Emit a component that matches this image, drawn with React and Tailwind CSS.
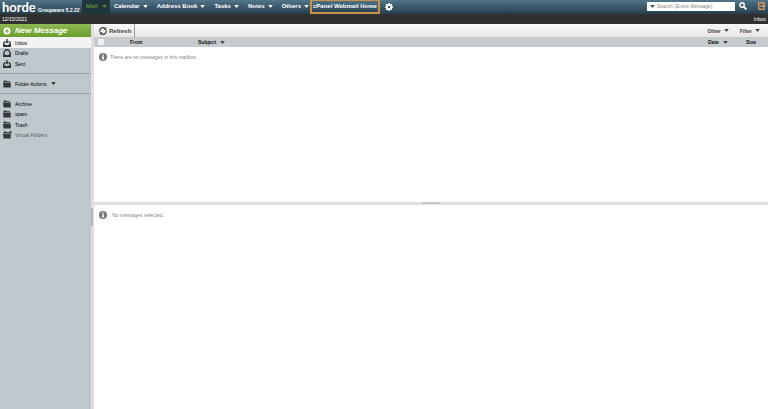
import React from 'react';

const Caret = ({ className = '' }) => (
  <svg viewBox="0 0 6 4" className={`h-[3px] w-[5px] shrink-0 ${className}`} aria-hidden="true">
    <path d="M0 0h6L3 4z" fill="currentColor" />
  </svg>
);

const TrayIcon = () => (
  <svg viewBox="0 0 16 16" className="h-2 w-2 shrink-0 text-[#2e3236]" aria-hidden="true">
    <path d="M4 5 1.500 8v6.500h13V8L12 5" fill="none" stroke="currentColor" strokeWidth="2.600" />
    <path d="M1 11h4l1.500 1.500h3L11 11h4v4.500H1z" fill="currentColor" />
    <path d="M6.700 0h2.600v4.500H12L8 9 4 4.500h2.700z" fill="currentColor" />
  </svg>
);

const DraftIcon = () => (
  <svg viewBox="0 0 16 16" className="h-2 w-2 shrink-0 text-[#2e3236]" aria-hidden="true">
    <path d="M1.500 8 5 2h6l3.500 6v6.500h-13z" fill="none" stroke="currentColor" strokeWidth="2.600" />
    <path d="M1 11h4l1.500 1.500h3L11 11h4v4.500H1z" fill="currentColor" />
  </svg>
);

const FolderIcon = ({ virtual }) => (
  <svg viewBox="0 0 16 16" className="h-2 w-2 shrink-0 overflow-visible text-[#34393c]" aria-hidden="true">
    <path d="M1 4V2.500L2 1h4.500l1 1.500H14V4z" fill="currentColor" />
    <path d="M0 5h15.500v10H1z" fill="currentColor" />
    {virtual && <circle cx="15" cy="2.500" r="3" fill="#565c60" />}
  </svg>
);

const InfoIcon = () => (
  <svg viewBox="0 0 16 16" className="h-2 w-2 shrink-0" aria-hidden="true">
    <circle cx="8" cy="8" r="8" fill="#777" />
    <path d="M6.700 3h2.800v2.400H6.700zM6 6.700h3.500V11h1v1.800H5.700V11h1V8.400H6z" fill="#fff" />
  </svg>
);

const GearIcon = () => (
  <svg viewBox="0 0 16 16" className="h-2 w-2" aria-hidden="true">
    <circle cx="8" cy="8" r="4.300" fill="none" stroke="#fff" strokeWidth="3.400" />
    <path
      d="M8 0v3M8 13v3M0 8h3M13 8h3M2.400 2.400l2 2M11.600 11.600l2 2M2.400 13.600l2-2M11.600 4.400l2-2"
      stroke="#fff"
      strokeWidth="3"
    />
  </svg>
);

const menus = ['Calendar', 'Address Book', 'Tasks', 'Notes', 'Others'];

const mailboxes = [
  { name: 'Inbox', icon: <TrayIcon />, active: true },
  { name: 'Drafts', icon: <DraftIcon /> },
  { name: 'Sent', icon: <TrayIcon /> },
];

const folders = [
  { name: 'Archive' },
  { name: 'spam' },
  { name: 'Trash' },
  { name: 'Virtual Folders', virtual: true },
];

function Header() {
  return (
    <header className="flex h-[14px] shrink-0 items-stretch bg-linear-to-b from-[#52758a] to-[#273e4b] text-[6px] font-bold text-white">
      <div className="flex w-[82px] shrink-0 items-center gap-[2px] pl-[2px]">
        <span className="font-['Lato',sans-serif] text-[13px] leading-[12px]">horde</span>
        <span className="pt-[6px] text-[5px] leading-[6px] whitespace-nowrap italic">Groupware 5.2.22</span>
      </div>
      <nav className="flex items-stretch whitespace-nowrap">
        <button className="flex w-7 items-center gap-1 bg-[#20343c] pb-[2px] pl-1 text-[#5c8a35]">
          Mail
          <Caret />
        </button>
        {menus.map((name) => (
          <button key={name} className="flex items-center gap-[3px] pr-[5px] pb-[2px] pl-1">
            {name}
            <Caret />
          </button>
        ))}
        <a
          href="#home"
          className="-ml-1 flex items-center border-2 border-t border-[#c9914a] px-px pb-[2px]"
        >
          cPanel Webmail Home
        </a>
        <button aria-label="Settings" className="flex w-[18px] items-center justify-center">
          <GearIcon />
        </button>
      </nav>
      <div className="ml-auto flex items-center gap-1 pr-[2px] pb-[2px]">
        <label className="flex h-[9px] w-[88px] items-center gap-[2px] bg-white pl-[3px] text-[#37474f]">
          <Caret />
          <input
            type="text"
            aria-label="Search"
            placeholder="Search (Entire Message)"
            className="h-2 w-full min-w-0 text-[5px] font-normal outline-none placeholder:text-[#888]"
          />
        </label>
        <button aria-label="Search" className="w-2">
          <svg viewBox="0 0 16 16" className="h-2 w-2" aria-hidden="true">
            <circle cx="6" cy="6" r="4.500" fill="none" stroke="#fff" strokeWidth="2.800" />
            <path d="m9.500 9.500 5.500 5.500" stroke="#fff" strokeWidth="3.600" />
          </svg>
        </button>
        <button aria-label="Log out" className="ml-[7px] w-2">
          <svg viewBox="0 0 16 16" className="h-2 w-2" aria-hidden="true">
            <path d="M12 4V1.500H1.500v13H12V12" fill="none" stroke="#c9915c" strokeWidth="3" />
            <path d="M5 6.500h5V3.500L16 8l-6 4.500v-3H5z" fill="#d8a066" />
          </svg>
        </button>
      </div>
    </header>
  );
}

function Sidebar() {
  return (
    <aside className="w-[91px] shrink-0 bg-[#bfc8cd]">
      <button className="flex h-[13px] w-full items-center gap-1 bg-linear-to-b from-[#8fb953] to-[#6b9d2c] pl-[3px] text-[8px] leading-[10px] font-bold whitespace-nowrap text-white italic">
        <svg viewBox="0 0 16 16" className="h-2 w-2 shrink-0" aria-hidden="true">
          <circle cx="8" cy="8" r="7" fill="#fff" />
          <path d="M8 4v8M4 8h8" stroke="#7aa83a" strokeWidth="2.400" />
        </svg>
        New Message
      </button>
      <ul>
        {mailboxes.map(({ name, icon, active }) => (
          <li key={name} className={`flex odd:h-[11px] even:h-[10px] ${active ? 'bg-[#f2f2f2]' : ''}`}>
            <a href="#mailbox" className="flex flex-1 items-center gap-1 pl-[3px] text-black">
              {icon}
              {name}
            </a>
          </li>
        ))}
      </ul>
      <div className="mt-1 border-y border-[#9aa3a8] py-1">
        <button className="flex h-[11px] items-center gap-1 pl-[3px] text-black">
          <FolderIcon />
          Folder Actions
          <Caret className="text-[#34393c]" />
        </button>
      </div>
      <ul className="pt-1">
        {folders.map(({ name, virtual }) => (
          <li key={name} className="flex odd:h-[11px] even:h-[10px]">
            <a
              href="#folder"
              className={`flex flex-1 items-center gap-1 pl-[3px] ${virtual ? 'text-[#596166]' : 'text-black'}`}
            >
              <FolderIcon virtual={virtual} />
              {name}
            </a>
          </li>
        ))}
      </ul>
    </aside>
  );
}

function Messages() {
  return (
    <main className="flex min-w-0 flex-1 flex-col bg-white">
      <div className="flex h-[13px] shrink-0 items-stretch bg-linear-to-b from-[#f8f8f8] to-[#e7e7e8] font-bold text-[#444]">
        <button className="flex w-[41px] items-center gap-[2px] border-r border-[#999] pl-[5px] text-[6px]">
          <svg viewBox="0 0 16 16" className="h-2 w-2 shrink-0" aria-hidden="true">
            <path
              d="M1.600 9.500A6.500 6.500 0 0 1 12 2.900M14.400 6.500A6.500 6.500 0 0 1 4 13.100"
              fill="none"
              stroke="#333"
              strokeWidth="2.200"
            />
            <path d="M14.500 0v5.500H9zM1.500 16v-5.500H7z" fill="#333" />
          </svg>
          Refresh
        </button>
        <button className="ml-auto flex items-center gap-[3px] pr-[11px]">
          Other
          <Caret />
        </button>
        <button className="flex items-center gap-[3px] pr-2">
          Filter
          <Caret />
        </button>
      </div>
      <table className="w-full table-fixed bg-[#c4cccf] text-left text-[#111]">
        <thead>
          <tr className="h-[10px]">
            <th className="w-9 pl-1">
              <input
                type="checkbox"
                aria-label="Select all"
                className="block h-[6px] w-[6px] appearance-none rounded-[1px] bg-[#eef1f2]"
              />
            </th>
            <th className="w-[68px]">From</th>
            <th>
              <span className="flex items-center gap-1">
                Subject
                <Caret className="text-[#444]" />
              </span>
            </th>
            <th className="w-[38px]">
              <span className="flex items-center gap-1">
                Date
                <Caret className="text-[#444]" />
              </span>
            </th>
            <th className="w-[22px]">Size</th>
          </tr>
        </thead>
      </table>
      <section className="flex-[153] p-[6px] pl-[5px]">
        <p className="flex items-center gap-[3px] text-[#888]">
          <InfoIcon />
          There are no messages in this mailbox.
        </p>
      </section>
      <div className="flex h-[3px] shrink-0 justify-center bg-[#e0e0e0]">
        <span className="h-[2px] w-[18px] bg-[#c4c4c4]" />
      </div>
      <section className="flex-[206] p-[6px] pl-[5px]">
        <p className="flex items-center gap-[5px] text-[#888]">
          <InfoIcon />
          No messages selected.
        </p>
      </section>
    </main>
  );
}

export default function App() {
  return (
    <div className="flex h-screen flex-col overflow-hidden font-['Liberation_Sans',Arial,sans-serif] text-[5px] leading-[8px]">
      <Header />
      <div className="flex h-[10px] shrink-0 items-center justify-between bg-[#303030] px-[2px] text-white">
        <span>12/15/2021</span>
        <span>Inbox</span>
      </div>
      <div className="flex min-h-0 flex-1">
        <Sidebar />
        <div className="flex w-[3px] shrink-0 flex-col bg-[#e0e0e0]">
          <span className="my-auto h-[18px] w-[2px] bg-[#b5b5b5]" />
        </div>
        <Messages />
      </div>
    </div>
  );
}
